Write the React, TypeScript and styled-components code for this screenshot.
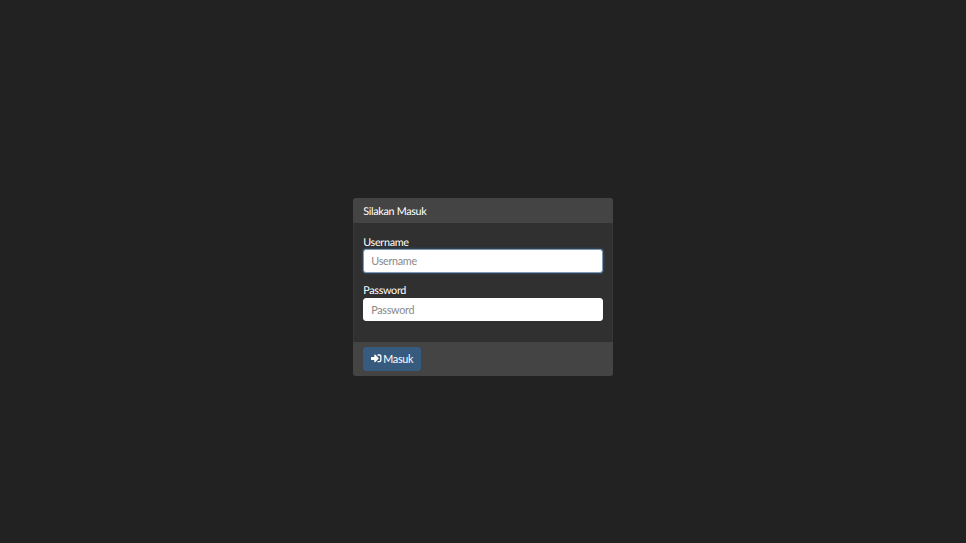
import { createGlobalStyle } from "styled-components";
import styled from "styled-components";
import { FaSignInAlt } from "react-icons/fa";

const GlobalStyle = createGlobalStyle`
  html, body {
    margin: 0;
    padding: 0;
    background: #222222;
    font-family: Lato, "Liberation Sans", sans-serif;
    font-size: 10.8px;
    letter-spacing: -0.32px;
    color: #ffffff;
    text-rendering: geometricPrecision;
  }
`;

const Page = styled.div`
  min-height: 543px;
  display: flex;
  justify-content: center;
  align-items: flex-start;
  padding-top: 197.5px;
  box-sizing: border-box;
`;

const Card = styled.form`
  width: 260.5px;
  background: #303030;
  border-radius: 3px;
  box-shadow: inset 0 0 0 1px rgba(255, 255, 255, 0.04);
  box-sizing: border-box;
  overflow: hidden;
`;

const CardHeader = styled.div`
  height: 25.5px;
  padding: 1.5px 10.5px 0;
  box-sizing: border-box;
  display: flex;
  align-items: center;
  background: #444444;
`;

const CardBody = styled.div`
  padding: 10.5px 10.5px 0;
`;

const Field = styled.div`
  display: flex;
  flex-direction: column;
  margin-bottom: 9.5px;
  &:last-child {
    margin-bottom: 20.5px;
  }
`;

const Label = styled.label`
  height: 15.5px;
  line-height: 17px;
`;

const Input = styled.input<{ $focused?: boolean }>`
  height: 23.5px;
  padding: 0 7px;
  box-sizing: border-box;
  border: 1px solid ${(p) => (p.$focused ? "#7f9ab6" : "#ffffff")};
  border-radius: 3px;
  background: #ffffff;
  font-family: inherit;
  font-size: 10.8px;
  letter-spacing: -0.3px;
  color: #464545;
  outline: none;
  box-shadow: ${(p) => (p.$focused ? "0 0 0 1.5px rgba(55, 90, 127, 0.35)" : "none")};
  &::placeholder {
    color: #888888;
    opacity: 1;
  }
`;

const CardFooter = styled.div`
  height: 34px;
  padding: 0 10.5px;
  display: flex;
  align-items: center;
  background: #444444;
`;

const SubmitButton = styled.button`
  height: 24px;
  padding: 0 7px;
  display: inline-flex;
  align-items: center;
  gap: 1.5px;
  background: #375a7f;
  border: 1px solid #375a7f;
  border-radius: 3px;
  color: #ffffff;
  font-family: inherit;
  font-size: 10.8px;
  letter-spacing: -0.3px;
`;

export default function App(): JSX.Element {
  return (
    <>
      <GlobalStyle />
      <Page>
        <Card onSubmit={(e) => e.preventDefault()}>
          <CardHeader>Silakan Masuk</CardHeader>
          <CardBody>
            <Field>
              <Label htmlFor="username">Username</Label>
              <Input id="username" placeholder="Username" $focused />
            </Field>
            <Field>
              <Label htmlFor="password">Password</Label>
              <Input id="password" type="password" placeholder="Password" />
            </Field>
          </CardBody>
          <CardFooter>
            <SubmitButton type="submit">
              <FaSignInAlt size={10.5} />
              Masuk
            </SubmitButton>
          </CardFooter>
        </Card>
      </Page>
    </>
  );
}
